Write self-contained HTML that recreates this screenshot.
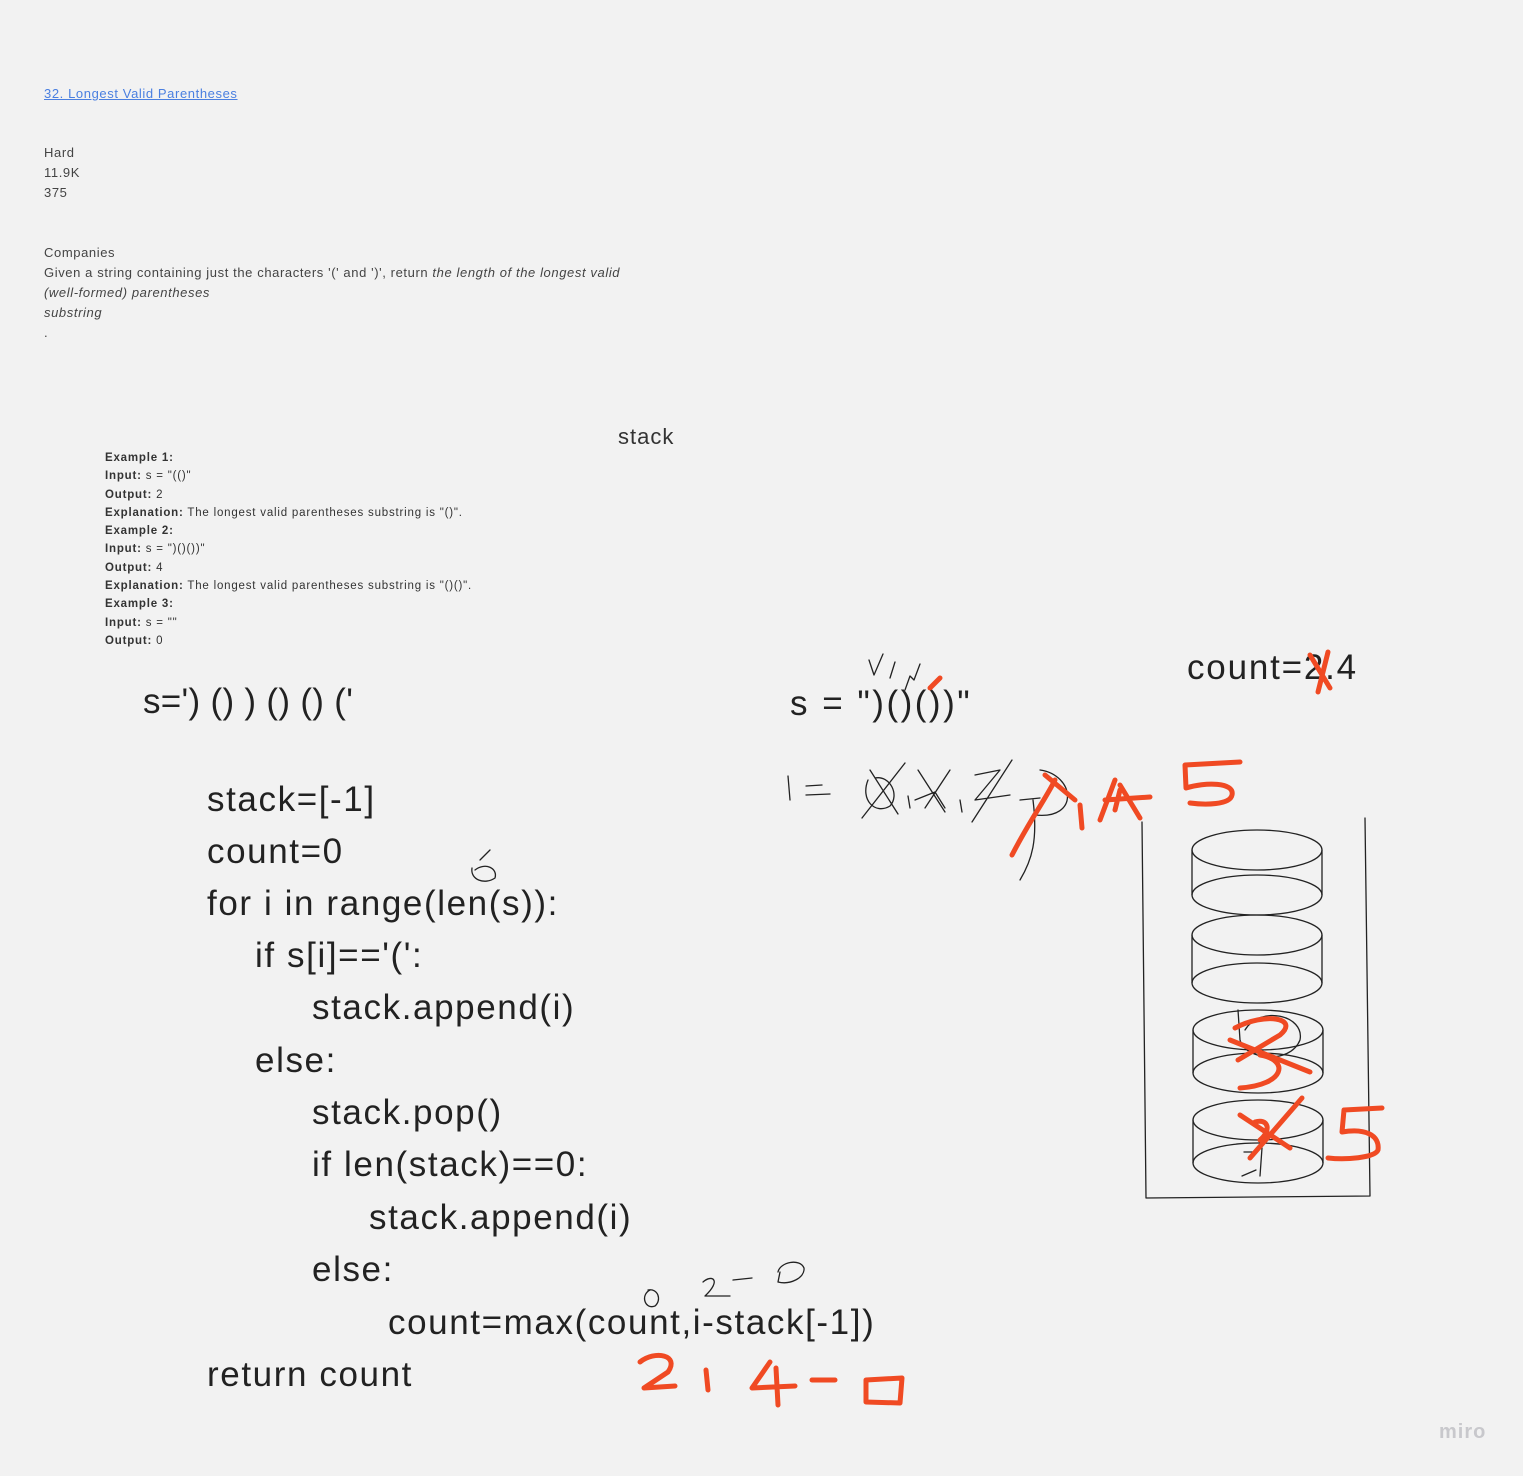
<!DOCTYPE html>
<html><head><meta charset="utf-8"><style>
html,body{margin:0;padding:0}
body{width:1523px;height:1476px;background:#f2f2f2;position:relative;overflow:hidden;font-family:"Liberation Sans",sans-serif;color:#333}
.a{position:absolute;white-space:nowrap}
.s{font-size:13px;line-height:20px;color:#444;letter-spacing:0.6px}
.e{font-size:11.5px;line-height:18.3px;color:#333;letter-spacing:0.8px}
.c{font-size:35px;color:#222;letter-spacing:1.6px}
b{font-weight:bold}
</style></head><body>
<div class="a s" style="left:44px;top:84px;color:#4a7fe0;text-decoration:underline">32. Longest Valid Parentheses</div>
<div class="a s" style="left:44px;top:143px">Hard<br>11.9K<br>375</div>
<div class="a s" style="left:44px;top:243px">Companies<br>Given a string containing just the characters '(' and ')', return <i>the length of the longest valid</i><br><i>(well-formed) parentheses</i><br><i>substring</i><br>.</div>
<div class="a" style="left:618px;top:424px;font-size:22px;color:#333;letter-spacing:1px">stack</div>
<div class="a e" style="left:105px;top:449px"><b>Example 1:</b><br><b>Input:</b> s = "(()"<br><b>Output:</b> 2<br><b>Explanation:</b> The longest valid parentheses substring is "()".<br><b>Example 2:</b><br><b>Input:</b> s = ")()())"<br><b>Output:</b> 4<br><b>Explanation:</b> The longest valid parentheses substring is "()()".<br><b>Example 3:</b><br><b>Input:</b> s = ""<br><b>Output:</b> 0</div>
<div class="a c" style="left:143px;top:682px;letter-spacing:0.3px">s=') () ) () () ('</div>
<div class="a c" style="left:207px;top:780px">stack=[-1]</div>
<div class="a c" style="left:207px;top:832px">count=0</div>
<div class="a c" style="left:207px;top:884px">for i in range(len(s)):</div>
<div class="a c" style="left:255px;top:936px">if s[i]=='(':</div>
<div class="a c" style="left:312px;top:988px">stack.append(i)</div>
<div class="a c" style="left:255px;top:1041px">else:</div>
<div class="a c" style="left:312px;top:1093px">stack.pop()</div>
<div class="a c" style="left:312px;top:1145px">if len(stack)==0:</div>
<div class="a c" style="left:369px;top:1198px">stack.append(i)</div>
<div class="a c" style="left:312px;top:1250px">else:</div>
<div class="a c" style="left:388px;top:1303px">count=max(count,i-stack[-1])</div>
<div class="a c" style="left:207px;top:1355px">return count</div>
<div class="a c" style="left:790px;top:684px;letter-spacing:2.5px">s = ")()())"</div>
<div class="a c" style="left:1187px;top:648px;letter-spacing:1.8px">count=2.4</div>
<div class="a" style="left:1439px;top:1421px;font-size:20px;font-weight:bold;color:#c8c8cc;letter-spacing:1px">miro</div>
<svg class="a" style="left:0;top:0" width="1523" height="1476" viewBox="0 0 1523 1476" fill="none" stroke-linecap="round" stroke-linejoin="round">
<g stroke="#222" stroke-width="1.3">
<path d="M1142 822 L1146 1198 L1370 1196 L1365 818"/>
<ellipse cx="1257" cy="850" rx="65" ry="20"/><ellipse cx="1257" cy="895" rx="65" ry="20"/><path d="M1192 850V895M1322 850V895"/>
<ellipse cx="1257" cy="935" rx="65" ry="20"/><ellipse cx="1257" cy="983" rx="65" ry="20"/><path d="M1192 935V983M1322 935V983"/>
<ellipse cx="1258" cy="1030" rx="65" ry="20"/><ellipse cx="1258" cy="1073" rx="65" ry="20"/><path d="M1193 1030V1073M1323 1030V1073"/>
<ellipse cx="1258" cy="1120" rx="65" ry="20"/><ellipse cx="1258" cy="1163" rx="65" ry="20"/><path d="M1193 1120V1163M1323 1120V1163"/>
<path d="M1244 1152 L1256 1152 M1262 1148 L1260 1176 M1256 1170 L1242 1176"/>
<path d="M1238 1010 L1240 1040 C1245 1060 1290 1065 1300 1040 C1305 1015 1260 1005 1245 1030"/>
<path d="M788 776 L790 800 M806 786 L822 785 M806 795 L830 794"/>
<path d="M868 780 C860 800 875 815 890 806 C900 795 890 775 875 778 M862 818 L905 763 M870 770 L898 814"/>
<path d="M908 796 L910 808 M918 770 L945 812 M925 808 L950 770 M915 800 L935 792 L945 808"/>
<path d="M960 800 L962 812 M975 775 L1000 770 L975 800 L1010 795 M972 822 L1012 760"/>
<path d="M1020 800 L1040 798 M1040 770 C1075 775 1080 820 1035 815 M1033 800 C1038 840 1032 860 1020 880"/>
<path d="M869 660 L874 675 L883 654 M890 678 L895 662 M905 690 L910 676 L914 680 L920 664"/>
<path d="M472 868 C470 880 485 885 495 878 C498 868 485 862 475 870 M480 860 L490 850"/>
<path d="M650 1290 C640 1295 645 1310 655 1306 C662 1300 658 1288 648 1290"/>
<path d="M703 1282 C712 1274 722 1280 705 1296 L730 1296 M733 1280 L752 1278"/>
<path d="M780 1272 L778 1282 C790 1285 805 1278 804 1268 C800 1258 780 1262 778 1272"/>
</g>
<g stroke="#f04a23" stroke-width="5">
<path d="M1310 655 L1330 688 M1328 652 L1318 692"/>
<path d="M930 688 L940 678"/>
<path d="M1012 855 C1030 820 1045 800 1055 780 M1045 775 L1075 800 M1080 805 L1082 828"/>
<path d="M1105 800 L1150 797 M1115 780 L1100 820 M1120 785 L1140 818 M1120 790 L1115 810"/>
<path d="M1240 762 L1185 765 L1186 788 C1205 782 1235 782 1232 795 C1230 805 1205 805 1190 803"/>
<path d="M1230 1040 L1310 1072 M1235 1028 C1265 1012 1300 1018 1280 1035 L1238 1060 M1260 1055 C1290 1060 1285 1085 1240 1088"/>
<path d="M1240 1115 L1290 1148 M1250 1158 L1302 1098 M1255 1122 C1268 1118 1272 1130 1260 1140"/>
<path d="M1382 1108 L1344 1110 L1342 1132 C1365 1128 1380 1135 1378 1150 C1375 1158 1345 1160 1328 1158"/>
<path d="M640 1362 C655 1350 680 1355 668 1372 L644 1388 L675 1386"/>
<path d="M706 1370 L708 1390"/>
<path d="M770 1362 L752 1388 L795 1386 M776 1368 L778 1405"/>
<path d="M812 1380 L835 1380"/>
<path d="M866 1380 L902 1378 L900 1403 L866 1402 Z"/>
</g>
</svg>
</body></html>
